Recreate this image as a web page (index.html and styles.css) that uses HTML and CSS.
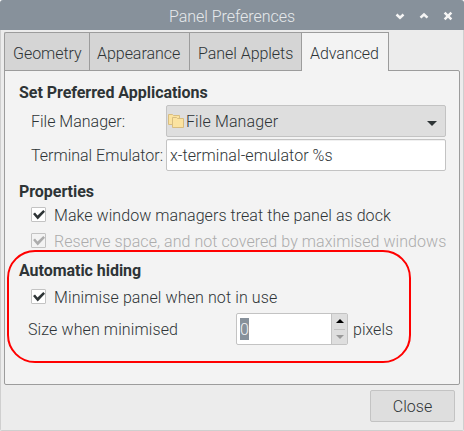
FILE: index.html
```html
<!DOCTYPE html>
<html lang="en">
<head>
<meta charset="utf-8">
<title>Panel Preferences</title>
<link rel="stylesheet" href="styles.css">
</head>
<body>
<div class="window">
  <header class="titlebar">
    <span class="title">Panel Preferences</span>
    <div class="controls">
      <svg width="10" height="10" viewBox="0 0 10 10"><path d="M1.500 3.500 5 6.700 8.500 3.500"/></svg>
      <svg width="10" height="10" viewBox="0 0 10 10"><path d="M1.500 6.700 5 3.500 8.500 6.700"/></svg>
      <svg width="10" height="10" viewBox="0 0 10 10"><path d="M1.600 1.600 8.400 8.400M8.400 1.600 1.600 8.400"/></svg>
    </div>
  </header>
  <main class="content">
    <nav class="tabs">
      <div class="tab geometry">Geometry</div>
      <div class="tab appearance">Appearance</div>
      <div class="tab applets">Panel Applets</div>
      <div class="tab active">Advanced</div>
    </nav>
    <section class="page">
      <h2>Set Preferred Applications</h2>
      <div class="form">
        <span class="text">File Manager:</span>
        <div class="combo">
          <svg class="folders" width="17" height="16" viewBox="0 0 17 16"><path d="M.5 1.500h4l1 1h6v9H.5z"/><path d="M4.500 4.500h4l1 1h6v9h-11z"/></svg>
          <span class="text">File Manager</span>
          <svg class="arrow" width="10" height="5" viewBox="0 0 10 5"><path d="M0 0h10L5 5z"/></svg>
        </div>
        <span class="text">Terminal Emulator:</span>
        <div class="entry"><span class="text">x-terminal-emulator %s</span></div>
      </div>
      <h2 class="properties">Properties</h2>
      <div class="check">
        <span class="box"><svg width="15" height="15" viewBox="0 0 15 15"><path d="m2 7 2-1.500 2.500 3L12.300 3 14 4.700 6.700 12.400z"/></svg></span>
        <span class="text">Make window managers treat the panel as dock</span>
      </div>
      <div class="check disabled">
        <span class="box"><svg width="15" height="15" viewBox="0 0 15 15"><path d="m2 7 2-1.500 2.500 3L12.300 3 14 4.700 6.700 12.400z"/></svg></span>
        <span class="text">Reserve space, and not covered by maximised windows</span>
      </div>
      <div class="highlight">
        <h2>Automatic hiding</h2>
        <div class="check">
          <span class="box"><svg width="15" height="15" viewBox="0 0 15 15"><path d="m2 7 2-1.500 2.500 3L12.300 3 14 4.700 6.700 12.400z"/></svg></span>
          <span class="text">Minimise panel when not in use</span>
        </div>
        <div class="size">
          <span class="label text">Size when minimised</span>
          <div class="spin">
            <span class="value">0</span>
            <div class="steps">
              <svg width="8" height="4" viewBox="0 0 8 4"><path d="M0 4h8L4 0z"/></svg>
              <svg class="down" width="8" height="4" viewBox="0 0 8 4"><path d="M0 0h8L4 4z"/></svg>
            </div>
          </div>
          <span class="text unit">pixels</span>
        </div>
      </div>
    </section>
    <footer><button>Close</button></footer>
  </main>
</div>
</body>
</html>
```
FILE: styles.css
```css
* { box-sizing: border-box; }
body {
  margin: 0;
  background: #fff;
  color: #2e3436;
  font: 300 16px/20px Roboto, sans-serif;
  white-space: nowrap;
}
svg { display: block; flex: none; }
.text { padding-top: 2px; }
.window {
  width: 464px;
  height: 431px;
  border-radius: 3px 3px 2px 2px;
  overflow: hidden;
  background: #ececec;
}
.titlebar {
  height: 30px;
  padding: 2px 11px 0 169px;
  display: flex;
  align-items: center;
  justify-content: space-between;
  background: #87919b;
  color: #e6e9eb;
}
.title { padding-top: 2px; letter-spacing: -0.03px; }
.controls { display: flex; gap: 14px; }
.controls path { fill: none; stroke: #f5f5f5; stroke-width: 2.5; }
.content {
  height: 401px;
  padding: 2px 3px 0;
  border: solid #cfcfcf;
  border-width: 0 1px 1px;
}
.tabs { display: flex; height: 39px; position: relative; z-index: 1; letter-spacing: -0.04px; }
.tab {
  height: 39px;
  padding: 11px 0 0 8px;
  border: 1px solid #9c9c9c;
  border-right: 0;
  background: #d5d5d5;
}
.geometry { width: 85px; border-top-left-radius: 2px; }
.appearance { width: 100px; padding-left: 7px; }
.applets { width: 112px; }
.active {
  width: 88px;
  border-right: 1px solid #9c9c9c;
  border-bottom: 0;
  background: #f3f3f3;
}
.page {
  width: 456px;
  height: 315px;
  margin-top: -1px;
  padding: 11px 13px 0 14px;
  border: 1px solid #9c9c9c;
  border-radius: 0 2px 2px 2px;
  background: #f3f3f3;
}
h2 {
  height: 20px;
  margin: 0;
  padding-top: 1px;
  font-size: 16px;
  font-weight: 700;
  line-height: 20px;
  letter-spacing: -0.04px;
}
.form {
  display: grid;
  grid-template-columns: 135px 280px;
  grid-template-rows: 32px 32px;
  row-gap: 2px;
  align-items: center;
  margin: 3px 0 0 12px;
}
.combo, .entry {
  height: 32px;
  display: flex;
  align-items: center;
  border: 1px solid #c3c3c3;
  border-radius: 2px;
}
.combo { padding: 0 8px 0 1px; background: #dedede; letter-spacing: 0.12px; }
.folders { margin-right: 1px; fill: #fbe3a0; stroke: #d8bd80; }
.arrow { margin: 5px 0 0 auto; fill: #2e3436; }
.entry { padding-left: 3px; background: #fff; box-shadow: inset 0 1px #f0f0f0; letter-spacing: 0.07px; }
.properties { margin-top: 10px; }
.check { display: flex; align-items: center; height: 26px; margin-left: 12px; gap: 8px; letter-spacing: 0.06px; }
.properties + .check { margin-top: 1px; }
.box { width: 15px; height: 15px; margin-bottom: 1px; border: 1px solid #c3c3c3; border-radius: 1px; background: #fff; }
.box svg { margin: -1px; fill: #2e3436; }
.disabled { color: #acacac; }
.disabled .box { background: #f3f3f3; }
.disabled .box svg { fill: #acacac; }
.highlight {
  width: 404px;
  height: 113px;
  margin: -4px 0 0 -12px;
  padding: 9px 0 0 10px;
  border: 2px solid #f00;
  border-radius: 28px;
}
.highlight h2 { padding-top: 0; }
.highlight .check { margin-top: 3px; letter-spacing: 0.11px; }
.size { display: flex; align-items: center; height: 32px; margin: 3px 0 0 9px; }
.label { width: 208px; letter-spacing: 0.11px; }
.spin {
  width: 112px;
  height: 32px;
  display: flex;
  align-items: center;
  margin-right: 5px;
  border: 1px solid #c3c3c3;
  border-radius: 2px;
  background: #fff;
}
.value { height: 22px; width: 9px; margin-left: 3px; line-height: 23px; background: #87919b; color: #f3f3f3; }
.steps {
  width: 16px;
  height: 30px;
  margin-left: auto;
  padding: 5px 3px 0 4px;
  border-left: 1px solid #c3c3c3;
  background: linear-gradient(#c3c3c3, #c3c3c3) 2px 15px / 11px 1px no-repeat #dedede;
}
.down { margin-top: 12px; fill: #999; }
footer { display: flex; justify-content: flex-end; padding: 5px 5px 0 0; }
button {
  width: 85px;
  height: 32px;
  padding: 1px 0 0;
  border: 1px solid #c3c3c3;
  border-radius: 2px;
  background: #dedede;
  color: #2e3436;
  font: inherit;
}
```
